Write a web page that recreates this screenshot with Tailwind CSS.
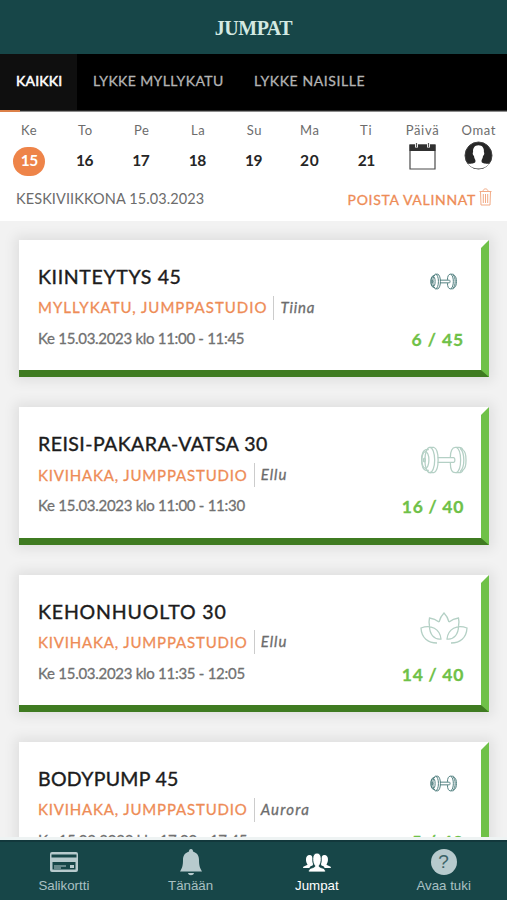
<!DOCTYPE html>
<html lang="fi">
<head>
  <meta charset="UTF-8" />
  <meta name="viewport" content="width=device-width, initial-scale=1.0"/>
  <title>Jumpat</title>
  <script src="https://cdn.jsdelivr.net/npm/@tailwindcss/browser@4"></script>
</head>
<body class="bg-white">
  <!-- Shared icons -->
  <svg class="hidden">
    <symbol id="dumbbell" viewBox="0 0 48 28">
      <g fill="none" stroke="currentColor">
        <path d="M18 11.6H34.5C36 12 36 16 34.5 16.4H18"/>
        <path d="M10 1H14C20 3 20 25 14 27H10"/>
        <ellipse cx="10" cy="14" rx="5" ry="13"/>
        <path d="M9 3.5H6C.2 5 .2 23 6 24.5H9"/>
        <ellipse cx="5.5" cy="14" rx="3.6" ry="8.5"/>
        <ellipse cx="4.5" cy="14" rx="1" ry="2"/>
        <path d="M31 11C31 5 33 1 36 1H40C43 1 44 4 44 4C48 6 48 22 44 24C44 24 43 27 40 27H36C33 27 31 23 31 17"/>
        <path d="M37 1C43 4 43 24 37 27M41 2C46 7 46 21 41 26"/>
      </g>
    </symbol>
  </svg>

  <div class="flex h-[900px] w-[507px] flex-col overflow-hidden font-['Lato',sans-serif]">
    <header class="flex h-[54px] shrink-0 items-center justify-center bg-[#174648] pt-[2px]">
      <h1 class="font-['Liberation_Serif',serif] text-[20px] font-bold leading-6 tracking-[-0.5px] text-[#d3e9e2]">JUMPAT</h1>
    </header>

    <!-- Filter tabs -->
    <nav class="flex h-[56px] shrink-0 bg-black text-[14px] leading-[53px] text-[#b4b4b4] [-webkit-text-stroke:0.3px]">
      <span class="w-[77px] bg-[#0f0f0f] pl-[16px] tracking-[0.2px] text-white [-webkit-text-stroke:0.5px]">KAIKKI</span>
      <span class="w-[162px] pl-[16px] tracking-[0.4px]">LYKKE MYLLYKATU</span>
      <span class="pl-[15px] tracking-[0.6px]">LYKKE NAISILLE</span>
    </nav>
    <div class="h-[2px] shrink-0 border-b border-[#8c8c8c] bg-[#262626]"><div class="h-[2px] w-[20px] bg-[#dc8048]"></div></div>

    <!-- Day picker -->
    <section class="h-[109px] shrink-0 bg-white">
      <div class="grid w-[507px] grid-cols-9 pt-[9px] text-center text-[13px] leading-[18px] tracking-[0.7px] text-[#6c6c6c]">
        <span class="pl-[2px]">Ke</span><span class="pl-[2px]">To</span><span class="pl-[2px]">Pe</span><span class="pl-[2px]">La</span><span class="pl-[2px]">Su</span><span>Ma</span><span>Ti</span><span>Päivä</span><span>Omat</span>
      </div>
      <div class="grid h-[44px] w-[507px] grid-cols-9 items-center justify-items-center text-[15.500px] font-bold leading-[18px] tracking-[-0.5px] text-[#262626]">
        <span class="ml-[2px] flex h-[29px] w-[32px] items-center justify-center rounded-full bg-[#ee8449] pb-[2px] text-white">15</span>
        <span class="-mt-[2px]">16</span><span class="-mt-[2px]">17</span><span class="-mt-[2px]">18</span><span class="-mt-[2px]">19</span><span class="-mt-[2px] tracking-[0.8px]">20</span><span class="-mt-[2px]">21</span>
        <svg class="mb-[9px] h-[27px] w-[27px]" viewBox="0 0 27 27" fill="none">
          <path d="M1 2H26V26H1Z" stroke="#4b4b4b" stroke-width="1.2"/>
          <path d="M.5 1.500H26.500V8H.5Z" fill="#303030"/>
          <path d="M7.500 0V4.500M19.500 0V4.500" stroke="#fff" stroke-width="3"/>
          <path d="M7.500 0V4M19.500 0V4" stroke="#555" stroke-width="1.200"/>
        </svg>
        <svg class="mb-[11px] h-[29px] w-[29px]" viewBox="0 0 29 29">
          <circle cx="14.500" cy="14.500" r="13.500" fill="#262626" stroke="#444"/>
          <path d="M14.500 4.200C18.500 4.200 20.200 7 19.900 11C20.800 12 20 14.500 19 15C18.800 17 18 18.500 17.600 19V21C19 23 23 22.500 25.200 23C22.500 26.200 18.500 27.500 14.500 27.500S6.500 26.200 3.800 23C6 22.500 10 23 11.400 21V19C11 18.500 10.200 17 10 15C9 14.500 8.200 12 9.100 11C8.800 7 10.500 4.200 14.500 4.200Z" fill="#fff"/>
        </svg>
      </div>
      <div class="flex justify-between pl-[16px] pr-[15px] pt-[5px]">
        <span class="text-[14.500px] leading-[22px] tracking-[0.1px] text-[#6c6c6c]">KESKIVIIKKONA 15.03.2023</span>
        <span class="flex text-[14px] leading-[24px] tracking-[0.7px] text-[#ee8c56] [-webkit-text-stroke:0.3px]">POISTA VALINNAT
          <svg class="ml-[3px] h-[18px] w-[13px]" viewBox="0 0 13 18" fill="none" stroke="#f2ab86">
            <path d="M.5 3.500H12.500M4 3.500C4 0 9 0 9 3.500M1.500 3.500L2 17H11L11.500 3.500M4.300 6V15M6.500 6V15M8.700 6V15"/>
          </svg>
        </span>
      </div>
    </section>

    <!-- Class list -->
    <main class="flex h-[616px] shrink-0 flex-col gap-[30px] overflow-hidden bg-[#f2f2f2] pl-[19px] pr-[18px] pt-[19px]">
      <article class="flex h-[137.400px] shrink-0 justify-between border-b-[7.500px] border-r-8 border-t-8 border-b-[#3f7b21] border-r-[#6fc148] border-t-white bg-white pl-[19px] pr-[17px] shadow-[0_0_12px_4px_rgba(0,0,0,0.08)]">
        <div class="pt-[16px]">
          <h2 class="text-[19.500px] leading-[26px] tracking-[0.650px] text-[#1c1c1c] [-webkit-text-stroke:0.4px]">KIINTEYTYS 45</h2>
          <p class="mt-[5px] flex h-[24px] items-center pt-[1px] text-[15px] [-webkit-text-stroke:0.3px]"><span class="tracking-[1px] text-[#ee8c56]">MYLLYKATU, JUMPPASTUDIO</span><i class="ml-[6px] h-[24px] border-l border-[#ccc] pl-[6px] leading-[22px] tracking-[0.8px] text-[#6c6c6c]">Tiina</i></p>
          <p class="mt-[8px] text-[15px] leading-[22px] tracking-[-0.3px] text-[#717171] [-webkit-text-stroke:0.3px]">Ke 15.03.2023 klo 11:00 - 11:45</p>
        </div>
        <div class="flex w-[70px] flex-col items-end">
          <div class="flex h-[66px] items-center pr-[7px] text-[#4b7b7b]"><svg class="h-[17px] w-[27px]"><use href="#dumbbell" stroke-width="1.700"/></svg></div>
          <p class="pt-[14px] text-[17.500px] font-bold leading-[24px] tracking-[0.9px] text-[#6fc148] [-webkit-text-stroke:0.3px]">6 / 45</p>
        </div>
      </article>

      <article class="flex h-[137.400px] shrink-0 justify-between border-b-[7.500px] border-r-8 border-t-8 border-b-[#3f7b21] border-r-[#6fc148] border-t-white bg-white pl-[19px] pr-[17px] shadow-[0_0_12px_4px_rgba(0,0,0,0.08)]">
        <div class="pt-[16px]">
          <h2 class="text-[19.500px] leading-[26px] tracking-[0.450px] text-[#1c1c1c] [-webkit-text-stroke:0.4px]">REISI-PAKARA-VATSA 30</h2>
          <p class="mt-[5px] flex h-[24px] items-center pt-[1px] text-[15px] [-webkit-text-stroke:0.3px]"><span class="tracking-[0.830px] text-[#ee8c56]">KIVIHAKA, JUMPPASTUDIO</span><i class="ml-[6px] h-[24px] border-l border-[#ccc] pl-[6px] leading-[22px] tracking-[1px] text-[#6c6c6c]">Ellu</i></p>
          <p class="mt-[8px] text-[15px] leading-[22px] tracking-[-0.28px] text-[#717171] [-webkit-text-stroke:0.3px]">Ke 15.03.2023 klo 11:00 - 11:30</p>
        </div>
        <div class="flex w-[70px] flex-col items-end">
          <div class="-mr-[3px] flex h-[90px] items-center text-[#b4d0c5]"><svg class="h-[28px] w-[47px]"><use href="#dumbbell" stroke-width="1.300"/></svg></div>
          <p class="-mt-[10px] text-[17.500px] font-bold leading-[24px] tracking-[0.7px] text-[#6fc148] [-webkit-text-stroke:0.3px]">16 / 40</p>
        </div>
      </article>

      <article class="flex h-[137.400px] shrink-0 justify-between border-b-[7.500px] border-r-8 border-t-8 border-b-[#3f7b21] border-r-[#6fc148] border-t-white bg-white pl-[19px] pr-[17px] shadow-[0_0_12px_4px_rgba(0,0,0,0.08)]">
        <div class="pt-[16px]">
          <h2 class="text-[19.500px] leading-[26px] tracking-[0.850px] text-[#1c1c1c] [-webkit-text-stroke:0.4px]">KEHONHUOLTO 30</h2>
          <p class="mt-[5px] flex h-[24px] items-center pt-[1px] text-[15px] [-webkit-text-stroke:0.3px]"><span class="tracking-[0.830px] text-[#ee8c56]">KIVIHAKA, JUMPPASTUDIO</span><i class="ml-[6px] h-[24px] border-l border-[#ccc] pl-[6px] leading-[22px] tracking-[1px] text-[#6c6c6c]">Ellu</i></p>
          <p class="mt-[8px] text-[15px] leading-[22px] tracking-[-0.28px] text-[#717171] [-webkit-text-stroke:0.3px]">Ke 15.03.2023 klo 11:35 - 12:05</p>
        </div>
        <div class="flex w-[70px] flex-col items-end">
          <div class="-mr-[4px] flex h-[90px] items-center">
            <svg class="h-[32px] w-[48px]" viewBox="0 0 48 32" fill="none" stroke="#b4d0c5" stroke-width="1.300">
              <path d="M19 10C20 6 22 3 24 1C26 3 28 6 29 10"/>
              <path d="M9.500 14C8.800 11 8.800 9 9.500 6C13 6.500 16.500 8 19 10M38.500 14C39.200 11 39.200 9 38.500 6C35 6.500 31.500 8 29 10"/>
              <path d="M17 31C8 31 1.500 26 1 16C11 12 20 17 21 27C14 28 9.500 22 9.500 14"/>
              <path d="M31 31C40 31 46.500 26 47 16C37 12 28 17 27 27C34 28 38.500 22 38.500 14"/>
            </svg>
          </div>
          <p class="-mt-[10px] text-[17.500px] font-bold leading-[24px] tracking-[0.7px] text-[#6fc148] [-webkit-text-stroke:0.3px]">14 / 40</p>
        </div>
      </article>

      <article class="flex h-[137.400px] shrink-0 justify-between border-b-[7.500px] border-r-8 border-t-8 border-b-[#3f7b21] border-r-[#6fc148] border-t-white bg-white pl-[19px] pr-[17px] shadow-[0_0_12px_4px_rgba(0,0,0,0.08)]">
        <div class="pt-[16px]">
          <h2 class="text-[19.500px] leading-[26px] tracking-[0.3px] text-[#1c1c1c] [-webkit-text-stroke:0.4px]">BODYPUMP 45</h2>
          <p class="mt-[5px] flex h-[24px] items-center pt-[1px] text-[15px] [-webkit-text-stroke:0.3px]"><span class="tracking-[0.830px] text-[#ee8c56]">KIVIHAKA, JUMPPASTUDIO</span><i class="ml-[6px] h-[24px] border-l border-[#ccc] pl-[6px] leading-[22px] tracking-[1.2px] text-[#6c6c6c]">Aurora</i></p>
          <p class="mt-[8px] text-[15px] leading-[22px] tracking-[-0.2px] text-[#717171] [-webkit-text-stroke:0.3px]">Ke 15.03.2023 klo 17:00 - 17:45</p>
        </div>
        <div class="flex w-[70px] flex-col items-end">
          <div class="flex h-[66px] items-center pr-[7px] text-[#4b7b7b]"><svg class="h-[17px] w-[27px]"><use href="#dumbbell" stroke-width="1.700"/></svg></div>
          <p class="pt-[14px] text-[17.500px] font-bold leading-[24px] tracking-[0.9px] text-[#6fc148] [-webkit-text-stroke:0.3px]">5 / 40</p>
        </div>
      </article>
    </main>

    <!-- Bottom navigation -->
    <footer class="grid h-[63px] shrink-0 grid-cols-4 border-t-[3px] border-[#eef3f3] bg-[#174648] text-center font-['Liberation_Sans',sans-serif] text-[13.300px] leading-[16px] text-[#a9c0c3] shadow-[inset_0_2px_0_#12383c]">
      <div class="flex flex-col items-center pl-[1px] pt-[9px]">
        <svg class="h-[27px] w-[28px]" viewBox="0 0 28 27">
          <path fill="#b7cacd" fill-rule="evenodd" d="M2 3H26Q28 3 28 5V21Q28 23 26 23H2Q0 23 0 21V5Q0 3 2 3ZM1.500 5.500V8.500H26.500V5.500ZM2.500 13V20.500H25.500V13Z"/>
          <path d="M4 17H16M4 19H11" stroke="#b7cacd"/>
          <path d="M20 17.500H24" stroke="#b7cacd" stroke-width="3"/>
        </svg>
        <span class="mt-[2px]">Salikortti</span>
      </div>
      <div class="flex flex-col items-center pl-[1px] pt-[9px]">
        <svg class="h-[27px] w-[22px]" viewBox="0 0 22 27" fill="#b7cacd">
          <path d="M11 0C12.500 0 13 1 13 2.500C17.500 4 19 7 19 11C19 17 20 19 22 22.500H0C2 19 3 17 3 11C3 7 4.500 4 9 2.500C9 1 9.500 0 11 0ZM8 24H14C13.500 27 8.500 27 8 24Z"/>
        </svg>
        <span class="mt-[2px]">Tänään</span>
      </div>
      <div class="flex flex-col items-center pt-[9px] text-white">
        <svg class="h-[27px] w-[28px]" viewBox="0 0 28 27" fill="#fff">
          <path d="M0 19C0 16.500 4 17 4.500 15.500C2.500 13 2 6 6.500 6C9 6 10 8 9.500 11C9.500 14 10.500 15.500 9.500 16.500C7.500 17 6.500 18 6.500 19Z"/>
          <path d="M28 19C28 16.500 24 17 23.500 15.500C25.500 13 26 6 21.500 6C19 6 18 8 18.500 11C18.500 14 17.500 15.500 18.500 16.500C20.500 17 21.500 18 21.500 19Z"/>
          <path stroke="#174648" stroke-width=".8" d="M5.500 23C5.500 18 11.500 19.500 12 17C9 14 8.500 4 14 4S19 14 16 17C16.500 19.500 22.500 18 22.500 23Z"/>
        </svg>
        <span class="mt-[2px]">Jumpat</span>
      </div>
      <div class="flex flex-col items-center pt-[9px]">
        <div class="flex size-[26px] items-center justify-center rounded-full bg-[#b7cacd] text-[19px] text-[#3b6367]">?</div>
        <span class="mt-[3px]">Avaa tuki</span>
      </div>
    </footer>
  </div>
</body>
</html>
